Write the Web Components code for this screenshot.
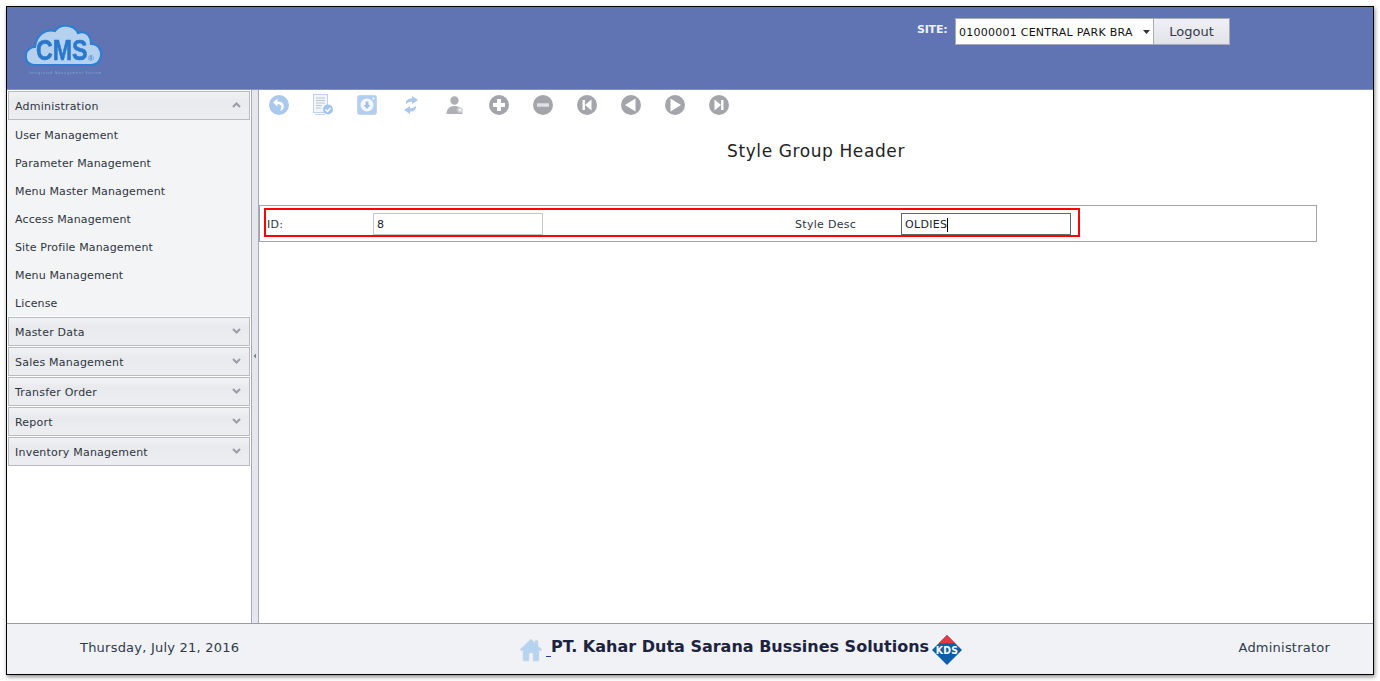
<!DOCTYPE html>
<html><head><meta charset="utf-8">
<style>
html,body{margin:0;padding:0;background:#fff;height:100%;overflow:hidden}
body{padding:6px 0 0 6px;box-sizing:border-box;font-family:"DejaVu Sans",Verdana,sans-serif;font-size:11px;color:#2a3340}
</style></head><body>
<app-frame>
  <app-header slot="header"></app-header>
  <side-menu slot="side">
    <menu-panel label="Administration" open>
      <menu-item>User Management</menu-item>
      <menu-item>Parameter Management</menu-item>
      <menu-item>Menu Master Management</menu-item>
      <menu-item>Access Management</menu-item>
      <menu-item>Site Profile Management</menu-item>
      <menu-item>Menu Management</menu-item>
      <menu-item>License</menu-item>
    </menu-panel>
    <menu-panel label="Master Data"></menu-panel>
    <menu-panel label="Sales Management"></menu-panel>
    <menu-panel label="Transfer Order"></menu-panel>
    <menu-panel label="Report"></menu-panel>
    <menu-panel label="Inventory Management"></menu-panel>
  </side-menu>
  <main-area slot="main" heading="Style Group Header">
    <tool-bar slot="tools"></tool-bar>
    <form-panel slot="form">
      <form-field label="ID:" value="8"></form-field>
      <form-field label="Style Desc" value="OLDIES" focused></form-field>
    </form-panel>
  </main-area>
  <app-footer slot="footer"></app-footer>
</app-frame>
<script>
function def(name, html, init){
  customElements.define(name, class extends HTMLElement{
    constructor(){super();this.attachShadow({mode:'open'}).innerHTML=html;}
    connectedCallback(){ if(init) init.call(this,this.shadowRoot); }
  });
}
def('app-frame',`<style>
:host{display:grid;box-sizing:border-box;width:1368px;height:669px;border:1px solid #000;box-shadow:1px 2px 4px rgba(0,0,0,.45);background:#fff;
grid-template-rows:83px 1fr 51px;grid-template-columns:244px 8px 1fr}
.h{grid-column:1/4}.f{grid-column:1/4}
.bar{background:#e6e7ee;border-left:1px solid #a9aab3;border-right:1px solid #a9aab3;display:flex;align-items:center;justify-content:center;box-sizing:border-box}
.bar svg{display:block;margin-top:-2px}
</style>
<div class="h"><slot name="header"></slot></div>
<slot name="side"></slot>
<div class="bar"><svg width="4" height="6" viewBox="0 0 4 6"><path d="M3 .5v5L.5 3z" fill="#7d8290"/></svg></div>
<slot name="main"></slot>
<div class="f"><slot name="footer"></slot></div>`);

def('app-header',`<style>
:host{display:flex;box-sizing:border-box;height:83px;background:#6074b3;border-bottom:1px solid #8a93ad;position:relative}
.logo{margin:15px 0 0 15px;width:82px;height:56px;flex:none;filter:blur(.3px)}
.logo text{font-family:"Liberation Sans",sans-serif}
.site{display:flex;align-items:flex-start;margin:11px 0 0 813px}
.lbl{color:#eef0f8;font-weight:bold;font-size:11px;line-height:14px;margin:5px 6px 0 0;font-family:"DejaVu Sans",sans-serif;width:32px;white-space:nowrap;letter-spacing:-.2px}
.sel{box-sizing:border-box;width:198px;height:27px;background:#fff;border:1px solid #a7a9b5;border-right:0;display:flex;align-items:center;padding:2px 0 0 3px;font-size:11px;color:#111;white-space:nowrap;position:relative;letter-spacing:.25px}
.sel svg{position:absolute;left:187px;top:11px}
.btn{box-sizing:border-box;width:77px;height:27px;border:1px solid #a7a9b5;background:linear-gradient(#f0f0f4,#e2e3ea);display:flex;align-items:center;justify-content:center;font-size:13px;color:#33394a}
</style>
<svg class="logo" viewBox="0 0 82 56">
  <path d="M11 43C3 43 1 37 2 32 3 27 8 25 11 25 12 14 21 6 31 9 36 1 50 2 54 11 61 8 67 13 67 22 74 22 78 28 77 34 76 40 72 43 67 43Z" fill="#b6d1ee" stroke="#2f7fd0" stroke-width="2.200" transform="translate(2 0)"/>
  <text transform="translate(14 38) scale(.8 1)" font-size="29" font-weight="bold" fill="#2a78cc" stroke="#2a78cc" stroke-width=".6">CMS</text>
  <text x="66" y="39" font-size="8" fill="#2a78cc">®</text>
  <text x="7" y="52" font-size="3.400" fill="#7ea8dc" textLength="72">Integrated Management System</text>
</svg>
<div class="site"><div class="lbl">SITE:</div>
<div class="sel"><span>01000001 CENTRAL PARK BRA</span><svg width="7" height="4" viewBox="0 0 7 4"><path d="M0 0h7L3.500 4z" fill="#333"/></svg></div>
<div class="btn">Logout</div></div>`);

def('side-menu',`<style>:host{display:flex;flex-direction:column;gap:1px;padding:1px 1px 0;box-sizing:border-box;background:#fff;min-height:0}</style><slot></slot>`);

def('menu-panel',`<style>
:host{display:block}
.t{box-sizing:border-box;height:29px;border:1px solid #b9bac2;background:linear-gradient(#f1f2f4,#e9eaee 35%,#eceef1);display:flex;align-items:center;padding:2px 8px 0 6px;justify-content:space-between;font-size:11px;letter-spacing:.22px;color:#2e3540}
.t svg{flex:none;margin-top:-3px}
.b{background:#f3f4f6;margin:0 -1px}
</style><div class="t"><span id="l"></span><svg width="9" height="6" viewBox="0 0 9 6"><path id="c" d="M1 5l3.500-3.500L8 5" fill="none" stroke="#9a9ca6" stroke-width="2"/></svg></div><div class="b"><slot></slot></div>`,
function(r){r.getElementById('l').textContent=this.getAttribute('label');
 if(!this.hasAttribute('open')) r.getElementById('c').setAttribute('d','M1 1l3.500 3.500L8 1');});

def('menu-item',`<style>:host{display:flex;align-items:center;box-sizing:border-box;height:28px;padding:2px 0 0 8px;font-size:11px;letter-spacing:.14px;color:#2e3540}</style><slot></slot>`);

def('main-area',`<style>
:host{display:block;min-width:0;background:#fff}
h1{margin:0;font-weight:normal;font-size:17px;line-height:20px;letter-spacing:.6px;color:#222;text-align:center;width:1114px;margin-top:21px}
.gap{height:44px}
</style><slot name="tools"></slot><h1 id="h"></h1><div class="gap"></div><slot name="form"></slot>`,
function(r){r.getElementById('h').textContent=this.getAttribute('heading');});

const g='#a3a5ab', w='#fff', b='#a9c8ec';
const round=(inner,c=g)=>`<svg width="20" height="20" viewBox="0 0 20 20"><circle cx="10" cy="10" r="10" fill="${c}"/>${inner}</svg>`;
const icons=[
 round(`<path d="M8.500 3.500L4 7.500l4.500 4V9c2.600 0 4 1.200 3.800 3.600-.1 1.300-.6 2.400-1.500 3.400 3-.8 4.300-2.900 4-5.500-.3-2.700-2.600-4-6.300-4z" fill="${w}"/>`,b),
 `<svg width="22" height="22" viewBox="0 0 22 22"><rect x="1.500" y=".5" width="14" height="18" fill="#f0f5fb" stroke="#bcd2ee"/><path d="M4 4h9M4 6.500h9M4 9h9M4 11.500h6M4 14h5" stroke="#c2c6cc" stroke-width="1"/><path d="M3 20.500h10" stroke="#bcd2ee"/><circle cx="16" cy="15.500" r="5" fill="#a3c5ec"/><path d="M13.500 15.500l2 2 3-3.500" fill="none" stroke="#fff" stroke-width="1.400"/></svg>`,
 `<svg width="20" height="20" viewBox="0 0 20 20"><rect x=".5" y=".5" width="19" height="19" rx="2" fill="#b2cef0" stroke="#c5d4e6"/><circle cx="10" cy="10" r="6.500" fill="#f4f8fd"/><path d="M8.500 6.500h3v3.500h2L10 14l-3.500-4h2z" fill="#9dbfe8"/><circle cx="16.500" cy="3.500" r="1" fill="#fff"/></svg>`,
 `<svg width="16" height="20" viewBox="0 0 16 20"><path d="M3 9C2.500 5.500 5 3.500 9 3.500V1l6 4-6 4V6.500C6.500 6.500 5 7.500 3 9z" fill="${b}"/><path d="M13 11c.5 3.500-2 5.500-6 5.500V19l-6-4 6-4v2.500c2.500 0 4-1 6-2.500z" fill="${b}"/></svg>`,
 `<svg width="20" height="20" viewBox="0 0 20 20"><circle cx="9.500" cy="5.500" r="4.200" fill="#afb0b5"/><path d="M1.500 19c0-5 3-8 8-8s8 3 8 8z" fill="#afb0b5"/><circle cx="15" cy="15" r="2.800" fill="#d2d3d6"/><circle cx="15" cy="15" r="1" fill="#fff"/></svg>`,
 round(`<path d="M4 8h4V4h4v4h4v4h-4v4H8v-4H4z" fill="${w}"/>`),
 round(`<rect x="4" y="8.300" width="12" height="3.400" fill="#e0e1e4"/>`),
 round(`<rect x="5.500" y="5" width="2.400" height="10" fill="${w}"/><path d="M14.500 4.500v11L8 10z" fill="${w}"/>`),
 round(`<path d="M14.500 3.500v13L4 10z" fill="${w}"/>`),
 round(`<path d="M5.500 3.500v13L16 10z" fill="${w}"/>`),
 round(`<path d="M5.500 4.500v11L12 10z" fill="${w}"/><rect x="12.100" y="5" width="2.400" height="10" fill="${w}"/>`)
];
def('tool-bar',`<style>
:host{display:flex;padding:5px 0 0 0;height:25px;box-sizing:content-box}
div{width:44px;height:20px;display:flex;align-items:center;justify-content:center;flex:none}
div:first-child{margin-left:-2px}
svg{filter:blur(.35px);margin-left:-4px}
</style>`+icons.map(i=>`<div>${i}</div>`).join(''));

def('form-panel',`<style>
:host{display:block;box-sizing:border-box;width:1058px;height:37px;border:1px solid #a3a4b0;padding:2px 0 0 4px}
.red{box-sizing:border-box;width:816px;height:29px;border:2px solid #f00;display:grid;grid-template-columns:528px 1fr;align-items:center;padding:0 0 0 1px}
</style><div class="red"><slot></slot></div>`);

def('form-field',`<style>
:host{display:grid;grid-template-columns:106px 170px;align-items:center;font-size:11px;letter-spacing:.3px;color:#2e3540;padding-top:2px}
#l{margin-top:2px}
.in{box-sizing:border-box;height:22px;border:1px solid #c3c4cc;background:#fff;display:flex;align-items:center;padding:1px 0 0 3px;color:#1c2230;white-space:nowrap;margin-top:1px}
:host([focused]) .in{border-color:#62666f}
.car{display:none;width:1px;height:14px;background:#000}
:host([focused]) .car{display:block}
</style><span id="l"></span><div class="in"><span id="v"></span><i class="car"></i></div>`,
function(r){r.getElementById('l').textContent=this.getAttribute('label');r.getElementById('v').textContent=this.getAttribute('value');});

def('app-footer',`<style>
:host{display:grid;grid-template-columns:512px auto 1fr;align-items:center;box-sizing:border-box;height:51px;background:#f1f2f5;border-top:1px solid #9a9ba3;font-size:13px;color:#2e3a4a;letter-spacing:.22px}
.d{padding-left:73px;margin-top:-3px}
.a{text-align:right;padding-right:43px;margin-top:-3px}
.c{display:flex;align-items:center}
.n{font-size:16px;font-weight:bold;color:#1c2340;letter-spacing:0;white-space:nowrap;line-height:20px;margin-top:-5px}
.u{width:5px;height:1px;background:#2a3a90;margin:14px 0 0 3px}
.home{filter:blur(.3px);margin-top:2px}
.kds{margin:2px 0 0 3px}
.kds text{font-family:"DejaVu Sans",sans-serif}
</style>
<div class="d">Thursday, July 21, 2016</div>
<div class="c">
<svg class="home" width="24" height="24" viewBox="0 0 24 24"><path d="M12 1L1 11.500l1.500 1.500L4 11.800V22a1 1 0 0 0 1 1h5v-8h4v8h5a1 1 0 0 0 1-1V11.800l1.500 1.200 1.500-1.500L19 8V2.500h-3V5z" fill="#b7d3f2" stroke="#d3d8df" stroke-width=".6"/></svg>
<span class="u"></span><span class="n">PT. Kahar Duta Sarana Bussines Solutions</span>
<svg class="kds" width="30" height="30" viewBox="0 0 31 31"><path d="M15.500 0L31 15.500 15.500 31 0 15.500z" fill="#0f5ea8"/><path d="M15.500 0L24 8.500H7z" fill="#e33a3f"/><text x="4" y="19.500" font-size="10" font-weight="bold" fill="#fff" textLength="23" lengthAdjust="spacingAndGlyphs">KDS</text></svg>
</div>
<div class="a">Administrator</div>`);
</script>
</body></html>
